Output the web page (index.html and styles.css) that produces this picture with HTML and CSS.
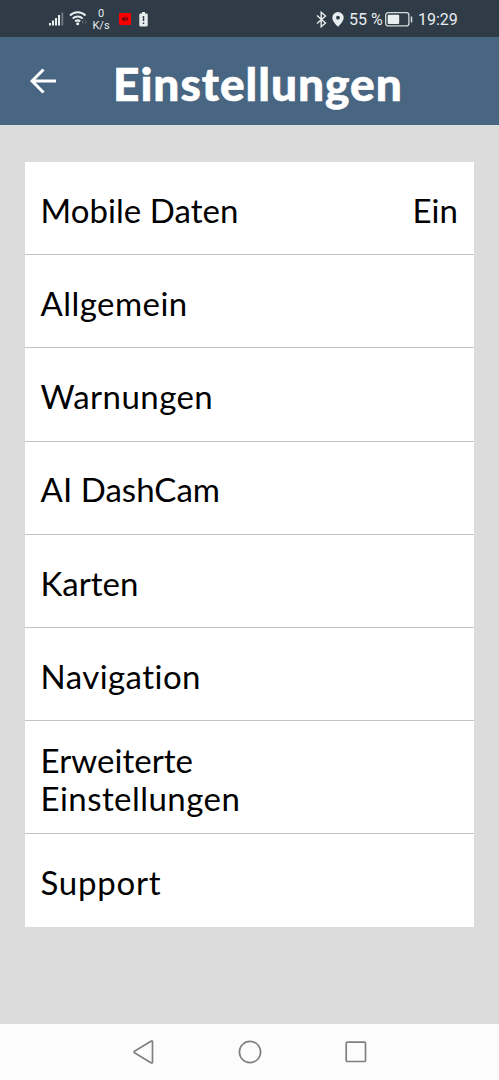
FILE: index.html
```html
<!DOCTYPE html>
<html lang="de">
<head>
    <meta charset="utf-8">
    <title>Einstellungen</title>
    <meta name="viewport" content="width=device-width, initial-scale=1.0">
    <link rel="stylesheet" href="styles.css">
</head>
<body>
    <div class="status-bar">
        <svg class="signal" width="16" height="16" viewBox="0 0 16 16">
            <path d="M2 14.500v-2.500M5 14.500v-5M8 14.500v-7.500M11 14.500v-10.500" />
            <path class="dim" d="M14.300 14.500v-13" />
        </svg>
        <svg class="wifi" width="18" height="16" viewBox="0 0 18 16">
            <path d="M1 5.500a10.800 10.800 0 0 1 15.500 0M3.700 8.600a7 7 0 0 1 10 0M6.200 11.400a4 4 0 0 1 5 0" />
            <circle cx="8.700" cy="13.800" r="1.500" />
            <path class="arrows" d="M14.500 10.500l-1.500 1.500 1.500 1.500M16 10.500l1.500 1.500-1.500 1.500" />
        </svg>
        <div class="speed">
            <span>0</span>
            <span>K/s</span>
        </div>
        <svg class="rec" width="12" height="12" viewBox="0 0 12 12">
            <rect width="12" height="12" rx="1" fill="#f90000" />
            <path d="M3 4.800h1.500l2-1.600v5.600l-2-1.600H3zM7.500 4.500h1.500v3H7.500z" fill="#650b10" />
        </svg>
        <svg class="battery-warn" width="9" height="15" viewBox="0 0 9 15">
            <path d="M3 0h3v1.500h1.500a1.200 1.200 0 0 1 1.200 1.200v10.600a1.200 1.200 0 0 1-1.200 1.200h-6a1.200 1.200 0 0 1-1.200-1.200V2.700a1.200 1.200 0 0 1 1.200-1.200H3z" fill="#e8edf0" />
            <path d="M4.500 4v5M4.500 10.500v1.600" stroke="#2f3b46" stroke-width="1.500" />
        </svg>
        <div class="status-right">
            <svg class="bluetooth" width="11" height="17" viewBox="0 0 11 17">
                <path d="M1 4.500l8.500 7.500-4.300 3.700V1.300L9.500 5 1 12.500" />
            </svg>
            <svg class="pin" width="12" height="15" viewBox="0 0 12 15">
                <path fill-rule="evenodd" d="M6 0a5.700 5.700 0 0 1 5.700 5.700C11.700 9.300 8 12.500 6 14.700 4 12.500.3 9.300.3 5.700A5.700 5.700 0 0 1 6 0zm0 3.800a1.900 1.900 0 1 0 0 3.800 1.900 1.900 0 0 0 0-3.800z" fill="#e8edf0" />
            </svg>
            <span class="percent">55 %</span>
            <svg class="battery" width="28" height="15" viewBox="0 0 28 15">
                <rect x=".7" y=".7" width="23.200" height="13.200" rx="2.500" fill="none" stroke="#d5dade" stroke-width="1.300" />
                <rect x="2.700" y="2.700" width="11.500" height="9.200" rx="1" fill="#e8edf0" />
                <path d="M26.500 4.500v6" stroke="#d5dade" stroke-width="1.500" />
            </svg>
            <span class="time">19:29</span>
        </div>
    </div>

    <div class="header">
        <svg class="back" width="26" height="26" viewBox="0 0 26 26">
            <path d="M26 13H2M13.500 1.500L2 13l11.500 11.500" />
        </svg>
        <h1>Einstellungen</h1>
    </div>

    <div class="content">
        <div class="settings">
            <div class="row"><span>Mobile Daten</span><span>Ein</span></div>
            <div class="row"><span class="wide">Allgemein</span></div>
            <div class="row"><span class="wide">Warnungen</span></div>
            <div class="row"><span>AI DashCam</span></div>
            <div class="row"><span>Karten</span></div>
            <div class="row"><span class="wide">Navigation</span></div>
            <div class="row tall"><span>Erweiterte<br><span class="wide">Einstellungen</span></span></div>
            <div class="row"><span class="wider">Support</span></div>
        </div>
    </div>

    <div class="nav-bar">
        <svg width="22" height="24" viewBox="0 0 22 24">
            <path d="M19.500 1.800v20.400a.8.800 0 0 1-1.200.7L1.500 12.700a.8.800 0 0 1 0-1.400L18.300 1.100a.8.800 0 0 1 1.200.7z" />
        </svg>
        <svg width="24" height="24" viewBox="0 0 24 24">
            <circle cx="12" cy="12" r="10.600" />
        </svg>
        <svg width="22" height="22" viewBox="0 0 22 22">
            <rect x="1.200" y="1.200" width="19.300" height="19.300" rx="1" />
        </svg>
    </div>
</body>
</html>
```
FILE: styles.css
```css
body {
    margin: 0;
    height: 1080px;
    display: flex;
    flex-direction: column;
    background: #dcdcdc;
    font-family: Lato, sans-serif;
    font-variant-ligatures: none;
    color: #000;
}

.status-bar {
    height: 37px;
    flex: none;
    display: flex;
    align-items: center;
    box-sizing: border-box;
    padding: 1px 41px 0 48px;
    background: #2f3b46;
    color: #e8edf0;
    font-family: Roboto, sans-serif;
}

.signal {
    margin-bottom: 1px;
    fill: none;
    stroke: #e8edf0;
    stroke-width: 2;
}

.signal .dim {
    stroke: #6d7780;
}

.wifi {
    margin: 0 0 2px 5px;
    fill: none;
    stroke: #e8edf0;
    stroke-width: 2;
}

.wifi circle {
    fill: #e8edf0;
    stroke: none;
}

.wifi .arrows {
    stroke: #6d7780;
    stroke-width: 1;
}

.speed {
    width: 18px;
    margin: 2px 0 0 5px;
    display: flex;
    flex-direction: column;
    align-items: center;
    font-size: 11px;
    line-height: 12px;
}

.rec {
    margin-left: 9px;
}

.battery-warn {
    margin-left: 8px;
}

.status-right {
    margin-left: auto;
    display: flex;
    align-items: center;
}

.bluetooth {
    fill: none;
    stroke: #e8edf0;
    stroke-width: 1.400;
}

.pin {
    margin-left: 5px;
}

.percent {
    width: 34px;
    margin-left: 5px;
    font-size: 16px;
    white-space: nowrap;
}

.battery {
    margin-left: 2px;
}

.time {
    width: 40px;
    margin-left: 5px;
    font-size: 16px;
}

.header {
    height: 88px;
    flex: none;
    display: flex;
    align-items: center;
    box-sizing: border-box;
    padding-left: 30px;
    background: #486582;
    color: #fff;
}

.back {
    fill: none;
    stroke: #fff;
    stroke-width: 3;
}

h1 {
    margin: 6px 0 0 57px;
    font-size: 46px;
    font-weight: 900;
    line-height: 56px;
    letter-spacing: 1px;
    -webkit-text-stroke: 0.6px #fff;
}

.content {
    flex: 1;
    padding: 37px 25px 0;
}

.settings {
    background: #fff;
}

.row {
    height: 93.2px;
    display: flex;
    align-items: center;
    justify-content: space-between;
    box-sizing: border-box;
    padding: 3.5px 16px 0 15.5px;
    border-bottom: 1px solid #c4c4c4;
    font-size: 33px;
    line-height: 38px;
    letter-spacing: 0.05px;
}

.row:last-child {
    border-bottom: none;
}

.tall {
    height: 112.6px;
}

.wide {
    letter-spacing: 0.45px;
}

.wider {
    letter-spacing: 0.75px;
}

.nav-bar {
    height: 56px;
    flex: none;
    display: flex;
    align-items: center;
    justify-content: center;
    gap: 83px;
    background: #fcfcfc;
}

.nav-bar svg {
    fill: none;
    stroke: #808080;
    stroke-width: 1.700;
}
```
